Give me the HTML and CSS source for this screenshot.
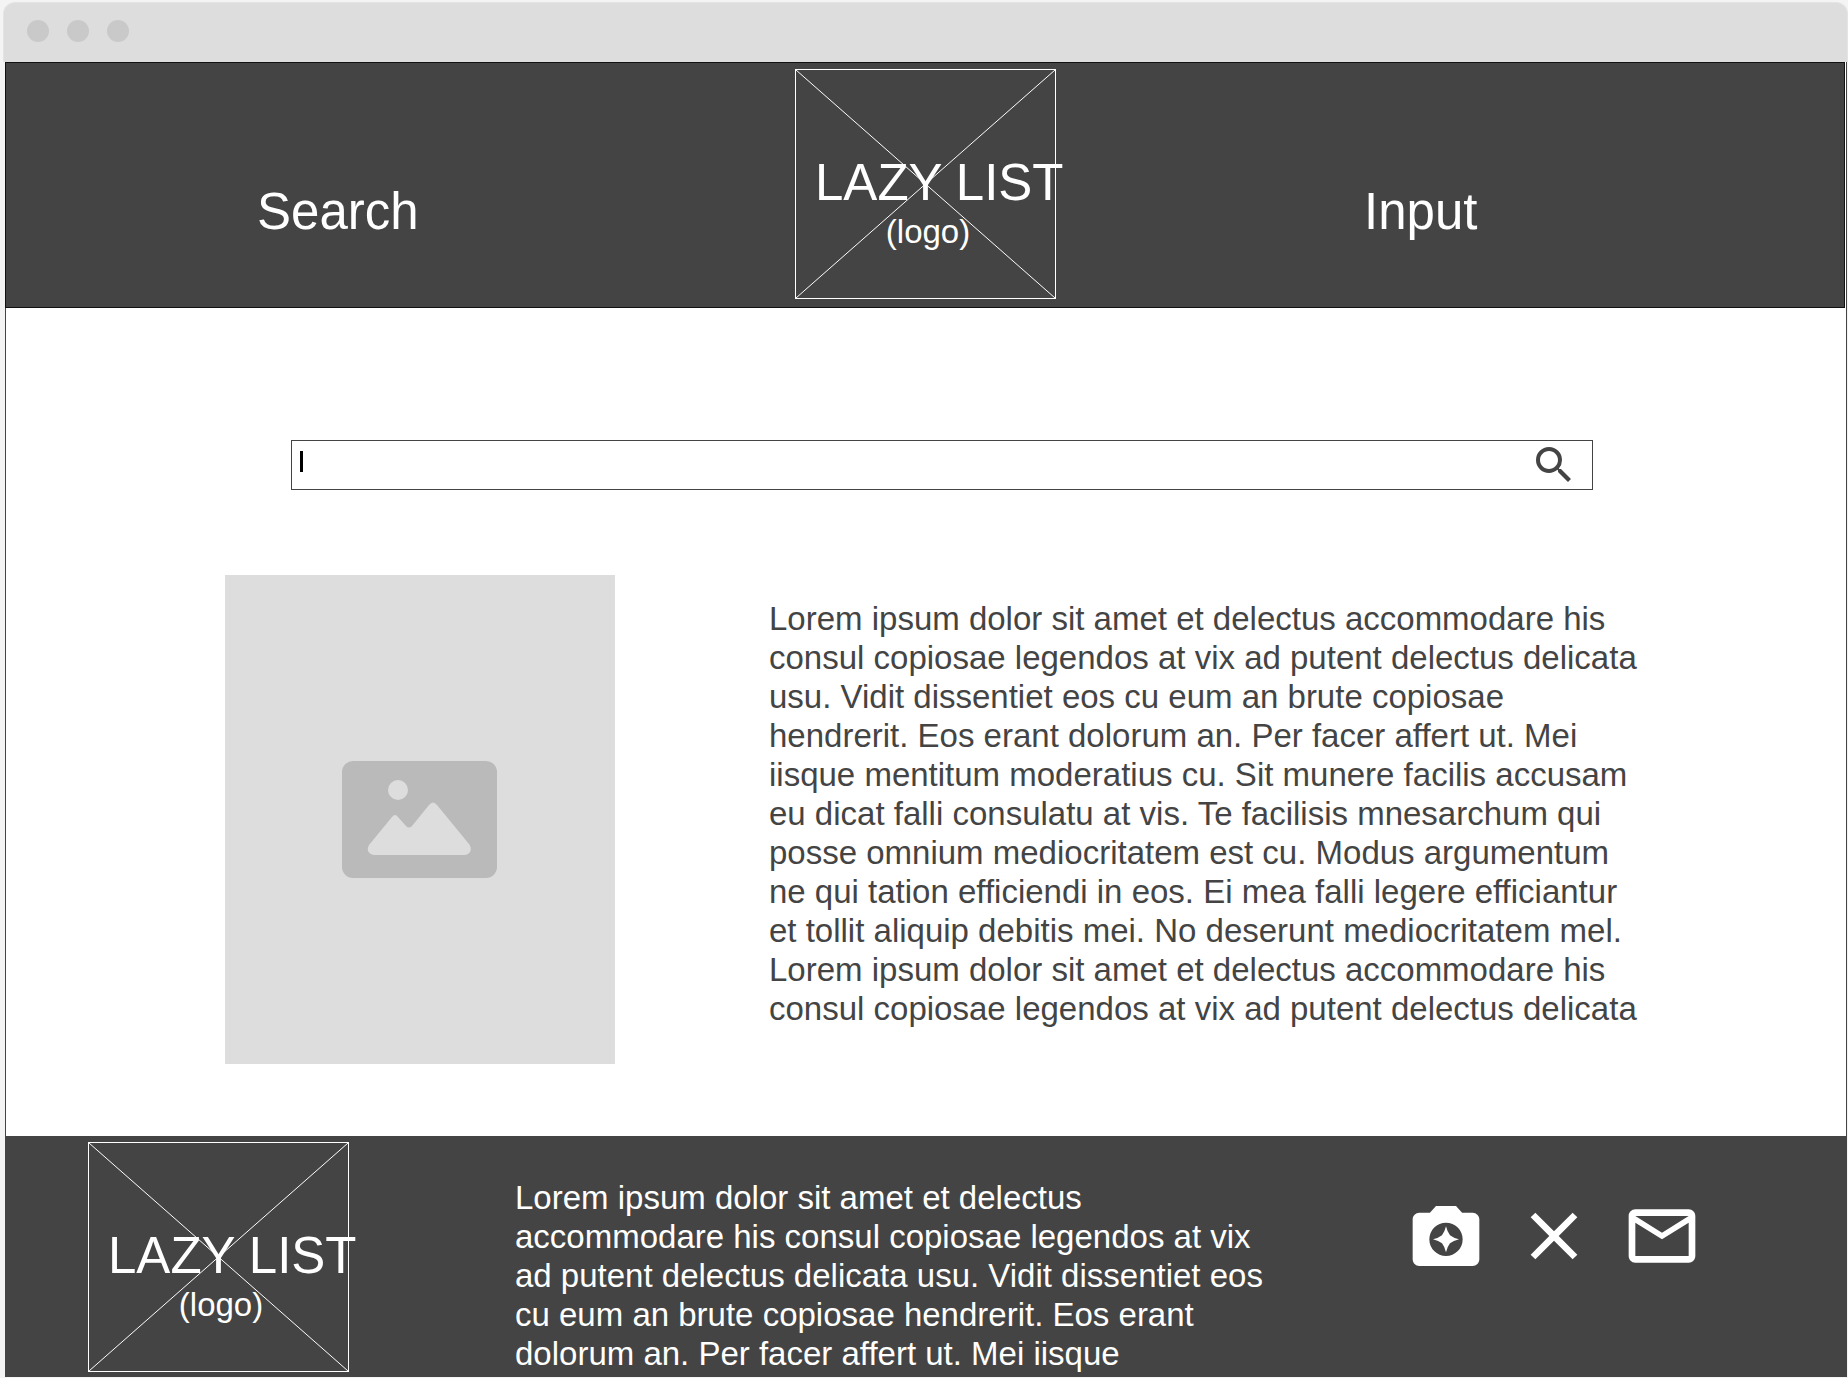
FILE: index.html
```html
<!DOCTYPE html>
<html lang="en">
<head>
<meta charset="utf-8">
<title>Lazy List</title>
<link rel="stylesheet" href="styles.css">
</head>
<body>
<div class="window">
  <div class="titlebar"><span class="dot"></span><span class="dot"></span><span class="dot"></span></div>
  <div class="page">
    <header class="header">
      <a class="nav-link nav-search" href="#search">Search</a>
      <div class="logo">
        <svg class="logo-cross" viewBox="0 0 261 230" preserveAspectRatio="none" aria-hidden="true"><path d="M0 0L261 230M261 0L0 230"/></svg>
        <span class="logo-name">LAZY LIST</span>
        <span class="logo-note">(logo)</span>
      </div>
      <a class="nav-link nav-input" href="#input">Input</a>
    </header>
    <main class="main">
      <form class="search" id="search">
        <input class="search-field" type="text" aria-label="Search">
        <span class="caret"></span>
        <button class="search-button" type="button" aria-label="Search">
          <svg width="48" height="48" viewBox="0 0 24 24"><path fill="#444" d="M15.5 14h-.79l-.28-.27A6.47 6.47 0 0 0 16 9.5 6.5 6.5 0 1 0 9.5 16c1.61 0 3.09-.59 4.23-1.57l.27.28v.79l5 4.99L20.49 19l-4.99-5zm-6 0C7.01 14 5 11.99 5 9.5S7.01 5 9.5 5 14 7.01 14 9.5 11.99 14 9.5 14z"/></svg>
        </button>
      </form>
      <div class="result">
        <div class="thumb">
          <svg width="155" height="117" viewBox="0 0 155 117" aria-hidden="true">
            <rect width="155" height="117" rx="11" fill="#bababa"/>
            <circle cx="56" cy="29" r="10" fill="#ddd"/>
            <path fill="#ddd" d="M27 84L50 56Q53 52 56 56L64 65Q67 68 70 65L87 44Q91 39 95 44L127 83Q130 87 128 91Q126 94 122 94H33Q28 94 26 90Q25 87 27 84Z"/>
          </svg>
        </div>
        <p class="text">Lorem ipsum dolor sit amet et delectus accommodare his consul copiosae legendos at vix ad putent delectus delicata usu. Vidit dissentiet eos cu eum an brute copiosae hendrerit. Eos erant dolorum an. Per facer affert ut. Mei iisque mentitum moderatius cu. Sit munere facilis accusam eu dicat falli consulatu at vis. Te facilisis mnesarchum qui posse omnium mediocritatem est cu. Modus argumentum ne qui tation efficiendi in eos. Ei mea falli legere efficiantur et tollit aliquip debitis mei. No deserunt mediocritatem mel. Lorem ipsum dolor sit amet et delectus accommodare his consul copiosae legendos at vix ad putent delectus delicata</p>
      </div>
    </main>
    <footer class="footer">
      <div class="logo">
        <svg class="logo-cross" viewBox="0 0 261 230" preserveAspectRatio="none" aria-hidden="true"><path d="M0 0L261 230M261 0L0 230"/></svg>
        <span class="logo-name">LAZY LIST</span>
        <span class="logo-note">(logo)</span>
      </div>
      <p class="text footer-text">Lorem ipsum dolor sit amet et delectus accommodare his consul copiosae legendos at vix ad putent delectus delicata usu. Vidit dissentiet eos cu eum an brute copiosae hendrerit. Eos erant dolorum an. Per facer affert ut. Mei iisque</p>
      <div class="social">
        <a class="social-link" href="#photos" aria-label="Photos"><svg width="80" height="80" viewBox="0 0 24 24"><path fill="#fff" fill-rule="evenodd" d="M9 3L7.17 5H4c-1.1 0-2 .9-2 2v12c0 1.1.9 2 2 2h16c1.1 0 2-.9 2-2V7c0-1.1-.9-2-2-2h-3.17L15 3H9zM12 18a5 5 0 1 1 0-10 5 5 0 0 1 0 10z"/><path fill="#fff" d="M12 9.1Q12.4 10.8 13.2 11.8Q14.2 12.6 15.9 13Q14.2 13.4 13.2 14.2Q12.4 15.2 12 16.9Q11.6 15.2 10.8 14.2Q9.8 13.4 8.1 13Q9.8 12.6 10.8 11.8Q11.6 10.8 12 9.1z"/></svg></a>
        <a class="social-link" href="#x" aria-label="X"><svg width="80" height="80" viewBox="0 0 24 24"><path fill="#fff" d="M19 6.41L17.59 5 12 10.59 6.41 5 5 6.41 10.59 12 5 17.59 6.41 19 12 13.41 17.59 19 19 17.59 13.41 12z"/></svg></a>
        <a class="social-link" href="#mail" aria-label="Mail"><svg width="80" height="80" viewBox="0 0 24 24"><path fill="#fff" d="M22 6c0-1.1-.9-2-2-2H4c-1.1 0-2 .9-2 2v12c0 1.1.9 2 2 2h16c1.1 0 2-.9 2-2V6zm-2 0l-8 5-8-5h16zm0 12H4V8l8 5 8-5v10z"/></svg></a>
      </div>
    </footer>
  </div>
</div>
</body>
</html>
```
FILE: styles.css
```css
* { box-sizing: border-box; }
body {
  margin: 0;
  background: #f4f4f4;
  color: #444;
  font-family: "Liberation Sans", Arial, sans-serif;
  font-size: 33px;
  line-height: 39px;
}
.window { padding: 2px 0 1px 3px; }
.titlebar {
  display: flex;
  gap: 18px;
  height: 60px;
  padding: 17px 23px;
  background: #ddd;
  border: 1px solid #e4e4e4;
  border-bottom: 0;
  border-radius: 12px 12px 0 0;
}
.dot { width: 22px; height: 22px; border-radius: 50%; background: #c9c9c9; }
.page {
  margin: 0 1px 0 2px;
  background: #fff;
  border: solid #444;
  border-width: 0 1px;
}
.header {
  display: grid;
  grid-template-columns: 251fr 538fr 261px 308fr 480fr;
  margin: 0 1px 0 -1px;
  padding: 6px 0 8px;
  border: 1px solid #111;
  background: #444;
}
.nav-link {
  align-self: start;
  margin-top: 113px;
  color: #fff;
  font-size: 51px;
  line-height: 60px;
  text-decoration: none;
}
.nav-search { grid-column: 2; }
.nav-input { grid-column: 5; }
.logo {
  position: relative;
  display: flex;
  flex-direction: column;
  flex: none;
  width: 261px;
  height: 230px;
  padding: 84px 0 0 19px;
  border: 1px solid #fff;
  color: #fff;
}
.logo-cross { position: absolute; inset: 0; width: 100%; height: 100%; fill: none; stroke: #fff; }
.logo-name { font-size: 51px; line-height: 58px; white-space: nowrap; }
.logo-note { padding-right: 14px; text-align: center; }
.main { padding: 132px 204px 72px 219px; }
.search {
  position: relative;
  display: flex;
  margin: 0 49px 0 66px;
  height: 50px;
  border: 1px solid #444;
}
.search-field {
  flex: 1;
  min-width: 0;
  padding: 0 8px;
  border: 0;
  outline: 0;
  background: none;
  color: #000;
  font: inherit;
}
.caret { position: absolute; left: 8px; top: 10px; width: 3px; height: 21px; background: #000; }
.search-button { width: 48px; height: 48px; margin-right: 14px; padding: 0; border: 0; background: none; }
.search-button svg, .social-link svg { display: block; }
.result { display: flex; gap: 154px; margin-top: 85px; }
.thumb {
  display: flex;
  flex: none;
  align-items: center;
  justify-content: center;
  width: 390px;
  height: 489px;
  padding-right: 2px;
  background: #ddd;
}
.text { flex: 1; margin: 0; padding-top: 24px; }
.footer {
  display: flex;
  margin: 0 -1px;
  height: 241px;
  padding: 6px 145px 0 83px;
  background: #444;
  color: #fff;
}
.footer-text { margin: 0 123px 0 166px; padding-top: 36px; }
.social { display: flex; gap: 28px; padding-top: 54px; }
```
